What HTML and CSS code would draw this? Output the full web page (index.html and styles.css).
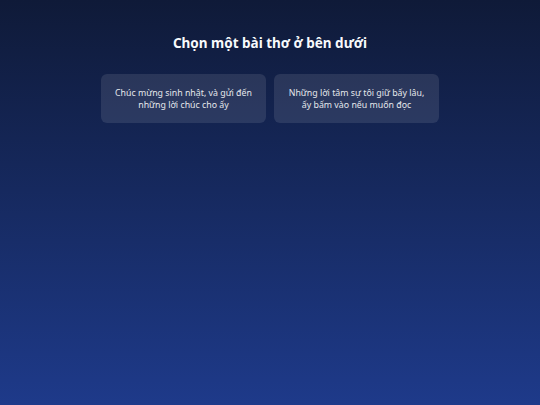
FILE: index.html
```html
<!DOCTYPE html>
<html lang="vi">
<head>
<meta charset="utf-8">
<link rel="stylesheet" href="styles.css">
</head>
<body>
<main class="page">
  <h1 class="title">Chọn một bài thơ ở bên dưới</h1>
  <div class="cards">
    <button class="card">Chúc mừng sinh nhật, và gửi đến những lời chúc cho ấy</button>
    <button class="card">Những lời tâm sự tôi giữ bấy lâu, ấy bấm vào nếu muốn đọc</button>
  </div>
</main>
</body>
</html>
```
FILE: styles.css
```css
html, body {
  margin: 0;
  padding: 0;
  height: 100%;
}
body {
  background: linear-gradient(180deg, #0f1a38 0%, #1e3a8a 100%);
  font-family: "Noto Sans", "Open Sans", sans-serif;
  color: #fff;
  min-height: 405px;
}
.page {
  display: flex;
  flex-direction: column;
  align-items: center;
  padding-top: 33px;
}
.title {
  margin: 0 0 21px;
  font-size: 13.5px;
  font-weight: 700;
  line-height: 20px;
  color: #f8fafc;
}
.cards {
  display: flex;
  gap: 8px;
}
.card {
  width: 165px;
  height: 49px;
  border: none;
  border-radius: 6px;
  background: rgba(255, 255, 255, 0.1);
  color: #e5e7eb;
  font-family: inherit;
  font-size: 8.8px;
  line-height: 12px;
  padding: 0 12px;
  text-align: center;
}
```
